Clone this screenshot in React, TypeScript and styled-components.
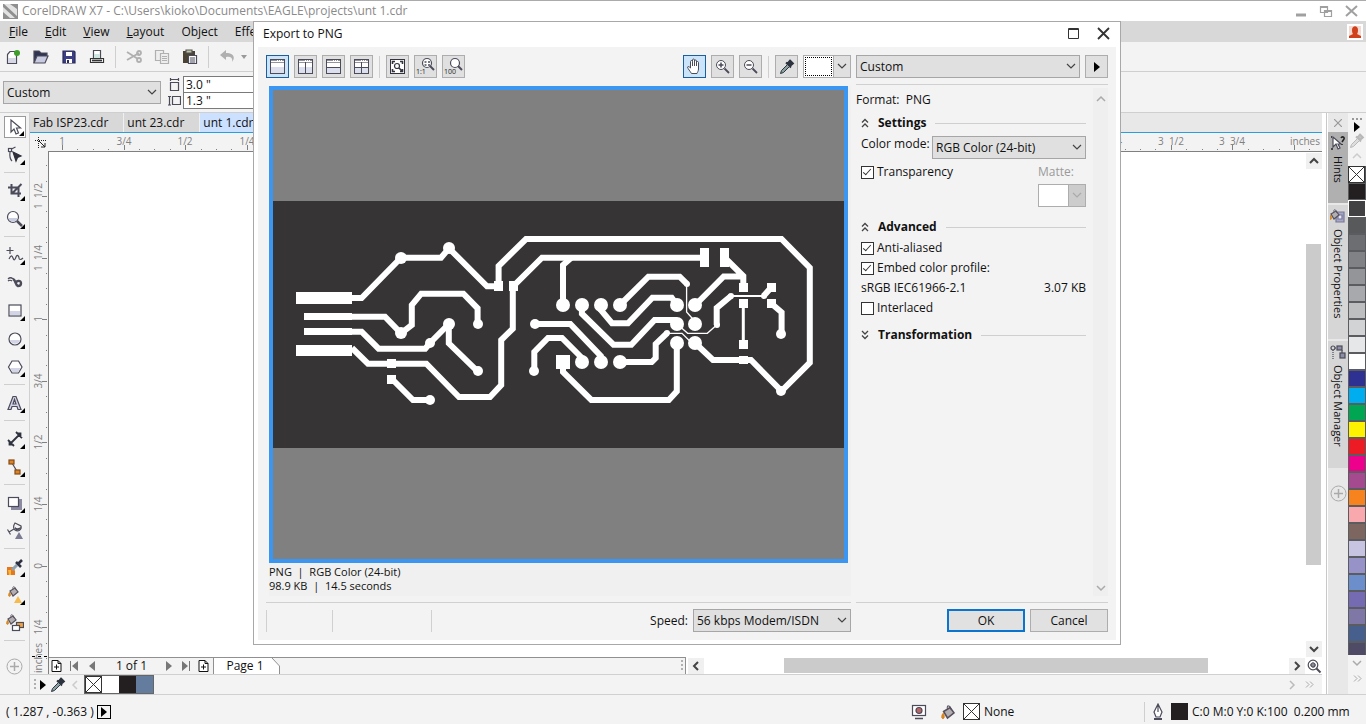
import React from "react";
import styled, { createGlobalStyle, css } from "styled-components";

const ink = "#4b4b5a";
const blue = "#3a96f0";

const GlobalStyle = createGlobalStyle`
  *, *::before, *::after { box-sizing: border-box; }
  body {
    margin: 0;
    background: #f3f3f3;
    color: #111;
    font-family: "Open Sans", "Noto Sans", sans-serif;
    font-size: 12px;
    line-height: 16px;
  }
  button, input, select { font: inherit; color: inherit; margin: 0; padding: 0; border-radius: 0; }
  button { background: none; border: 0; display: flex; align-items: center; justify-content: center; }
  svg { display: block; flex: none; }
`;

/* ---------- frame ---------- */

const Page = styled.div`
  position: relative;
  display: flex;
  flex-direction: column;
  height: 100vh;
  min-height: 600px;
  overflow: hidden;
  border-top: 1px solid #ababab;
`;

const TitleBar = styled.header`
  display: flex;
  align-items: center;
  gap: 4px;
  height: 20px;
  flex: none;
  padding: 0 8px 0 3px;
  background: #fff;
  color: #8a8a8a;
`;

const AppTitle = styled.h1`
  flex: 1;
  margin: 0;
  font-size: 12px;
  font-weight: 400;
  white-space: nowrap;
`;

const WindowButtons = styled.div`
  display: flex;
  gap: 12px;
`;

const MenuBar = styled.nav`
  display: flex;
  align-items: center;
  height: 21px;
  flex: none;
  padding: 0 3px 0 9px;
  gap: 17px;
  background: #d8d8d8;
`;

const Underlined = styled.span`
  text-decoration: underline;
`;

const Avatar = styled.button`
  width: 16px;
  height: 16px;
  margin-left: auto;
  background: #fff;
`;

const ToolBar = styled.div`
  display: flex;
  align-items: center;
  height: 30px;
  flex: none;
  padding-left: 5px;
  gap: 10px;
  border-bottom: 1px solid #cfcfcf;
`;

const ToolGroup = styled.div<{ $gap: number }>`
  display: flex;
  align-items: center;
  gap: ${(p) => p.$gap}px;
`;

const PropertyBar = styled.div`
  display: flex;
  align-items: center;
  height: 41px;
  flex: none;
  padding: 1px 3px 0;
  border-bottom: 1px solid #cfcfcf;
`;

const VRule = styled.span<{ $h: number; $m?: number }>`
  width: 1px;
  height: ${(p) => p.$h}px;
  margin: 0 ${(p) => p.$m ?? 0}px;
  flex: none;
  background: #cfcfcf;
`;

const SizeFields = styled.div`
  display: flex;
  flex-direction: column;
  margin-left: 7px;
`;

const SizeField = styled.label`
  display: flex;
  align-items: center;
  gap: 2px;
  height: 16px;
`;

const SizeInput = styled.input`
  width: 90px;
  height: 17px;
  padding-left: 2px;
  border: 1px solid #7a7a7a;
  background: #fff;
`;

/* ---------- select ---------- */

const SelectBox = styled.span<{ $w?: number }>`
  position: relative;
  display: flex;
  height: 23px;
  ${(p) => (p.$w ? css`width: ${p.$w}px; flex: none;` : css`flex: 1; min-width: 0;`)}
  svg {
    position: absolute;
    right: 4px;
    top: 8px;
    pointer-events: none;
  }
`;

const NativeSelect = styled.select`
  appearance: none;
  width: 100%;
  height: 100%;
  padding: 0 18px 0 3px;
  border: 1px solid #a6a6a6;
  background: #e0e0e0;
`;

const Chevron = ({ color = "#444" }: { color?: string }) => (
  <svg width="10" height="7" viewBox="0 0 10 7" fill="none" stroke={color} strokeWidth="1.2">
    <path d="M1 1l4 4 4-4" />
  </svg>
);

function Select({ id, label, options, width }: { id?: string; label?: string; options: string[]; width?: number }) {
  return (
    <SelectBox $w={width}>
      <NativeSelect id={id} aria-label={label}>
        {options.map((o) => (
          <option key={o}>{o}</option>
        ))}
      </NativeSelect>
      <Chevron />
    </SelectBox>
  );
}

/* ---------- workspace ---------- */

const Workspace = styled.main`
  display: flex;
  flex: 1;
  min-height: 0;
`;

const Toolbox = styled.div`
  display: flex;
  flex-direction: column;
  width: 30px;
  flex: none;
  border-right: 1px solid #d0d0d0;
`;

const Tool = styled.button<{ $active?: boolean }>`
  position: relative;
  width: 22px;
  height: 22px;
  margin: 3px 0 3px 4px;
  flex: none;
  ${(p) => p.$active && css`border: 1px solid #9a9a9a; background: #fff;`}
`;

const Flyout = styled.i`
  position: absolute;
  right: 1px;
  bottom: 1px;
  border-left: 5px solid transparent;
  border-bottom: 5px solid #000;
`;

const ToolRule = styled.span`
  height: 1px;
  margin: 3px 4px 4px;
  flex: none;
  background: #cfcfcf;
`;

const AddTool = styled.button`
  margin: auto auto 19px 6px;
`;

const Center = styled.section`
  display: flex;
  flex-direction: column;
  flex: 1;
  min-width: 0;
`;

const Tabs = styled.div`
  display: flex;
  height: 20px;
  flex: none;
  background: #e8e8e8;
  border-bottom: 1px solid #2a9ddf;
`;

const DocTab = styled.button<{ $active?: boolean }>`
  justify-content: flex-start;
  padding: 0 15px 0 3px;
  border-right: 1px solid #f0f0f0;
  white-space: nowrap;
  background: ${(p) => (p.$active ? "#cce0ff" : "#d8d8d8")};
`;

const RulerRow = styled.div`
  display: flex;
  height: 19px;
  flex: none;
`;

const RulerCorner = styled.div`
  display: flex;
  align-items: center;
  justify-content: center;
  width: 18px;
  flex: none;
  padding-left: 3px;
`;

const TopRuler = styled.div`
  flex: 1;
  min-width: 0;
  overflow: hidden;
  border-bottom: 1px solid #808080;
`;

const CanvasRow = styled.div`
  display: flex;
  flex: 1;
  min-height: 0;
`;

const SideRuler = styled.div`
  width: 19px;
  flex: none;
  overflow: hidden;
  border-right: 1px solid #808080;
`;

const CanvasColumn = styled.div`
  display: flex;
  flex-direction: column;
  flex: 1;
  min-width: 0;
`;

const Sheet = styled.div`
  display: flex;
  justify-content: flex-end;
  flex: 1;
  min-height: 0;
  background: #fff;
`;

const VScroll = styled.div`
  display: flex;
  flex-direction: column;
  align-items: center;
  width: 17px;
  padding-top: 1px;
`;

const ScrollButton = styled.button`
  width: 16px;
  height: 16px;
  flex: none;
  background: #f0f0f0;
`;

const VTrack = styled.div`
  display: flex;
  flex-direction: column;
  flex: 1;
  width: 15px;
  padding: 75px 0 76px;
`;

const Thumb = styled.div`
  flex: 1;
  background: #cbcbcb;
`;

const PageBar = styled.div`
  display: flex;
  height: 17px;
  flex: none;
`;

const PageNav = styled.div`
  display: flex;
  align-items: center;
  flex: 1;
  border-top: 1px solid #909090;
  border-right: 1px solid #909090;
  padding-left: 2px;
`;

const NavGroup = styled.div`
  display: flex;
  align-items: center;
  gap: 7px;
`;

const PageCount = styled.span`
  width: 55px;
  text-align: center;
`;

const PageTab = styled.button`
  position: relative;
  width: 67px;
  height: 16px;
  margin-left: 4px;
  padding-right: 4px;
  border-left: 1px solid #909090;
  svg { position: absolute; inset: 0; }
  span { position: relative; }
`;

const Grip = styled.span<{ $end?: boolean }>`
  width: 2px;
  height: 12px;
  margin: ${(p) => (p.$end ? "0 2px 0 auto" : "0")};
  background: repeating-linear-gradient(#b0b0b0 0 2px, transparent 2px 4px);
`;

const HScroll = styled.div`
  display: flex;
  flex: 1;
  align-items: center;
  background: #fff;
  padding-left: 2px;
`;

const HTrack = styled.div`
  display: flex;
  flex: 1;
  height: 15px;
  padding: 0 81px 0 80px;
`;

const DocPalette = styled.div`
  display: flex;
  align-items: center;
  height: 20px;
  flex: none;
  padding: 0 8px 0 4px;
  gap: 4px;
  border-top: 1px solid #d0d0d0;
`;

const SwatchStrip = styled.div`
  display: flex;
  border: 1px solid #666;
`;

const Swatch = styled.button<{ $c: string }>`
  width: 17px;
  height: 17px;
  flex: none;
  background: ${(p) => p.$c};
`;

const PaletteEnd = styled.span`
  display: flex;
  gap: 8px;
  margin-left: auto;
`;

const Docker = styled.aside`
  display: flex;
  flex-direction: column;
  width: 26px;
  flex: none;
  border-left: 4px solid #fff;
  background: #e8e8e8;
  box-shadow: inset 1px 0 #c8c8c8, inset 2px 0 #fff;
  padding-left: 2px;
`;

const DockerClose = styled.button`
  height: 19px;
  flex: none;
`;

const DockerTab = styled.button<{ $active?: boolean; $h: number }>`
  flex-direction: column;
  justify-content: flex-start;
  gap: 5px;
  height: ${(p) => p.$h}px;
  padding-top: 3px;
  flex: none;
  margin-bottom: 2px;
  font-size: 11px;
  background: ${(p) => (p.$active ? "#b0b0b0" : "#d6d6d6")};
  span { writing-mode: vertical-rl; line-height: 18px; white-space: nowrap; }
`;

const DockerAdd = styled.button`
  margin-top: 15px;
`;

const ColorBar = styled.aside`
  display: flex;
  flex-direction: column;
  align-items: center;
  width: 18px;
  flex: none;
`;

const ColorTop = styled.div`
  display: flex;
  flex-direction: column;
  align-items: center;
  justify-content: space-between;
  height: 53px;
  flex: none;
  padding: 5px 0;
`;

const ColorList = styled.div`
  display: flex;
  flex-direction: column;
  flex: 1;
  min-height: 0;
  width: 100%;
  overflow: hidden;
  background: #55565a;
`;

const PaletteSwatch = styled.button<{ $c: string; $ring?: boolean }>`
  height: 17px;
  width: 100%;
  flex: none;
  border: 1px solid ${(p) => (p.$ring ? "#fff" : "#5b5c60")};
  background: ${(p) => p.$c};
`;

const ColorEnd = styled.div`
  display: flex;
  flex-direction: column;
  align-items: center;
  gap: 6px;
  height: 39px;
  flex: none;
  padding-top: 3px;
`;

const StatusBar = styled.footer`
  display: flex;
  align-items: center;
  height: 30px;
  flex: none;
  padding: 4px 26px 0 6px;
  border-top: 1px solid #d0d0d0;
`;

const StatusGroup = styled.div<{ $w: number }>`
  display: flex;
  align-items: center;
  gap: 4px;
  width: ${(p) => p.$w}px;
  white-space: pre;
`;

const PlayBox = styled.button`
  width: 14px;
  height: 14px;
  margin: 0 auto 0 3px;
  border: 1px solid #000;
`;

/* ---------- dialog ---------- */

const Dialog = styled.section`
  position: absolute;
  top: 20px;
  left: 253px;
  right: 245px;
  bottom: 79px;
  display: flex;
  flex-direction: column;
  padding: 0 4px 4px;
  border: 1px solid #a8a8a8;
  background: #fff;
`;

const DialogTitle = styled.div`
  display: flex;
  align-items: center;
  height: 25px;
  flex: none;
  gap: 18px;
  padding: 0 6px 2px 5px;
  h2 { flex: 1; margin: 0; font-size: 12px; font-weight: 400; }
`;

const DialogBody = styled.div`
  display: flex;
  flex: 1;
  min-height: 0;
  gap: 5px;
  padding: 8px 8px 0;
  background: #f3f3f3;
`;

const PreviewColumn = styled.div`
  display: flex;
  flex-direction: column;
  flex: 1;
  min-width: 0;
`;

const OptionColumn = styled.div`
  display: flex;
  flex-direction: column;
  width: 252px;
  flex: none;
`;

const Row = styled.div`
  display: flex;
  align-items: center;
  flex: none;
  gap: 5px;
`;

const Push = styled.span`
  margin-left: auto;
`;

const IconButton = styled.button<{ $active?: boolean }>`
  width: 23px;
  height: 23px;
  flex: none;
  border: 1px solid ${(p) => (p.$active ? "#1b5fa0" : "#adadad")};
  background: ${(p) => (p.$active ? "#cce4f9" : "#e0e0e0")};
`;

const ColorPick = styled.button`
  width: 48px;
  height: 23px;
  flex: none;
  justify-content: space-between;
  align-items: stretch;
  border: 1px solid #adadad;
  background: #fff;
`;

const PickArea = styled.span<{ $focus?: boolean }>`
  flex: 1;
  margin: 1px;
  border: 1px ${(p) => (p.$focus ? "dotted #000" : "solid #fff")};
`;

const PickArrow = styled.span<{ $dim?: boolean }>`
  display: flex;
  align-items: center;
  justify-content: center;
  width: 17px;
  border-left: 1px solid #adadad;
  background: ${(p) => (p.$dim ? "#cccccc" : "#e0e0e0")};
`;

const PreviewArea = styled.div`
  display: flex;
  flex-direction: column;
  flex: 1;
  min-height: 0;
  margin: 8px 0 6px 3px;
  background: #eff0ef;
`;

const Preview = styled.div`
  display: flex;
  align-items: center;
  flex: 1;
  min-height: 0;
  margin-right: 3px;
  border: 4px solid ${blue};
  background: #808080;
  svg { width: 100%; height: auto; background: #373435; }
`;

const PreviewInfo = styled.p`
  margin: 0;
  padding: 2px 0 3px;
  font-size: 11px;
  line-height: 14px;
  white-space: pre;
`;

const Footer = styled.div`
  display: flex;
  align-items: center;
  flex: none;
  gap: 5px;
  height: 38px;
  padding-bottom: 2px;
  border-top: 1px solid #d0d0d0;
`;

const StatusCell = styled.span<{ $w: number }>`
  width: ${(p) => p.$w}px;
  height: 22px;
  border-left: 1px solid #d0d0d0;
`;

const Options = styled.div`
  display: flex;
  flex: 1;
  min-height: 0;
  margin: 6px 0;
  border-top: 1px solid #d0d0d0;
`;

const OptionList = styled.div`
  display: flex;
  flex-direction: column;
  flex: 1;
  padding: 5px 7px 0 0;
`;

const OptionScroll = styled.div`
  display: flex;
  flex-direction: column;
  justify-content: space-between;
  align-items: center;
  width: 15px;
  margin-top: 3px;
  padding: 6px 0 3px;
  background: #efefef;
`;

const SectionHead = styled.h3`
  display: flex;
  align-items: center;
  gap: 9px;
  height: 20px;
  margin: 3px 0 0;
  padding-left: 5px;
  font-size: 12px;
  font-weight: 700;
  &::after { content: ""; flex: 1; height: 1px; background: #cfcfcf; }
`;

const Group = styled.div`
  display: flex;
  flex-direction: column;
  padding: 1px 0 4px 5px;
`;

const ModeRow = styled.div`
  display: flex;
  justify-content: space-between;
  height: 24px;
  margin: 2px 0 1px;
  white-space: nowrap;
`;

const SplitRow = styled.div`
  display: flex;
  justify-content: space-between;
  height: 20px;
  align-items: center;
`;

const CheckLabel = styled.label`
  display: flex;
  align-items: center;
  gap: 3px;
  height: 20px;
`;

const Check = styled.input`
  appearance: none;
  position: relative;
  width: 13px;
  height: 13px;
  border: 1px solid #333;
  background: #fff;
  &:checked::after {
    content: "";
    position: absolute;
    left: 3px;
    top: 0;
    width: 4px;
    height: 8px;
    border: solid #333;
    border-width: 0 1px 1px 0;
    transform: rotate(42deg);
  }
`;

const Matte = styled.div`
  display: flex;
  flex-direction: column;
  width: 48px;
  gap: 4px;
  padding-top: 2px;
  color: #9a9a9a;
`;

const TransparencyRow = styled.div`
  display: flex;
  justify-content: space-between;
  align-items: flex-start;
  height: 49px;
  padding-top: 1px;
`;

const DialogButton = styled.button<{ $primary?: boolean }>`
  width: 78px;
  height: 23px;
  border: ${(p) => (p.$primary ? "2px solid #0b74cf" : "1px solid #adadad")};
  background: #e1e1e1;
`;

/* ---------- icons ---------- */

const Svg = ({ w = 18, h = 18, children }: { w?: number; h?: number; children: React.ReactNode }) => (
  <svg width={w} height={h} viewBox={`0 0 ${w} ${h}`} fill="none" stroke={ink} strokeWidth="1.2">
    {children}
  </svg>
);

const Dropper = ({ faded }: { faded?: boolean }) => (
  <Svg w={16} h={16}>
    <g stroke={faded ? "#b8b8b8" : "#2d3440"} fill={faded ? "#c4c4c4" : "#2d3440"}>
      <path d="M11 1.500l3 3-3 2.500-2.500-2.500zM7 3.500l5 5" strokeWidth="1.800" />
      <path d="M8.500 5.500l-6 6-1 3 3-1 6-6z" fill={faded ? "#ddd" : "#8aa0a0"} strokeWidth="1" />
    </g>
  </Svg>
);

const NoColor = () => (
  <svg width="17" height="17" viewBox="0 0 17 17" fill="#fff" stroke="#333" strokeWidth="1">
    <rect x=".5" y=".5" width="16" height="16" />
    <path d="M1 1l15 15M16 1L1 16" />
  </svg>
);

const CirclePlus = () => (
  <svg width="17" height="17" viewBox="0 0 17 17" fill="none" stroke="#aaa">
    <circle cx="8.500" cy="8.500" r="7.500" />
    <path d="M8.500 4v9M4 8.500h9" strokeWidth="1.500" />
  </svg>
);

const Arrow = () => (
  <svg width="6" height="10" viewBox="0 0 6 10" fill="#000">
    <path d="M0 0l6 5-6 5z" />
  </svg>
);

const Angle = ({ dir, color = "#444", width = 2 }: { dir: "up" | "down" | "left" | "right"; color?: string; width?: number }) => {
  const paths = { up: "M1 7l4-4 4 4", down: "M1 3l4 4 4-4", left: "M7 1L3 5l4 4", right: "M3 1l4 4-4 4" };
  return (
    <svg width="10" height="10" viewBox="0 0 10 10" fill="none" stroke={color} strokeWidth={width}>
      <path d={paths[dir]} />
    </svg>
  );
};

const DoubleAngle = () => (
  <svg width="9" height="9" viewBox="0 0 9 9" fill="none" stroke="#aaa">
    <path d="M1 1.500l3 3-3 3M5 1.500l3 3-3 3" />
  </svg>
);

const Fold = ({ open }: { open?: boolean }) => (
  <svg width="8" height="10" viewBox="0 0 8 10" fill="none" stroke="#444" strokeWidth="1.300">
    <path d={open ? "M1 4.500l3-3 3 3M1 9l3-3 3 3" : "M1 1l3 3 3-3M1 5.500l3 3 3-3"} />
  </svg>
);

const PageAdd = () => (
  <svg width="11" height="12" viewBox="0 0 11 12" fill="#fff" stroke="#111">
    <path d="M1 .5h6l3 3v8H1zM7 .5v3h3M5.500 4.500v5M3 7h5" />
  </svg>
);

const Bucket = ({ x = 0, y = 0 }: { x?: number; y?: number }) => (
  <g transform={`translate(${x} ${y})`}>
    <path d="M2 5l5-3 3 4-5 4z" fill="#b3aeb2" stroke="#55505c" />
    <path d="M1.500 6.500c-1 1-1.500 4 0 4s1-3 .5-4z" fill="#e08b1c" stroke="#c77a18" strokeWidth=".6" />
    <path d="M5 3C4 0 7-.5 8 4" stroke="#55505c" strokeWidth=".8" />
  </g>
);

const tools: { name: string; icon: React.ReactNode; flyout?: boolean; rule?: boolean }[] = [
  { name: "Pick", flyout: true, icon: <path d="M5 2v12l3-3 2 5 2.500-1-2-5h4z" fill="#fff" /> },
  {
    name: "Shape", flyout: true, rule: true,
    icon: <><rect x="2.500" y="2.500" width="3" height="3" fill="#fff" /><path d="M5.500 3l4-2M4 6c-.5 4 0 7 2 9" /><path d="M7 6l8 4-3.500 1.500L10 15z" fill="#2d2f3a" stroke="#2d2f3a" /></>,
  },
  { name: "Crop", flyout: true, icon: <path d="M2 5.500h10.500V15M5.500 2v9.500H15M15.500 2L6 11.500" strokeWidth="2" /> },
  {
    name: "Zoom", flyout: true, rule: true,
    icon: <><circle cx="7" cy="7" r="5.500" fill="#fff" /><path d="M2.500 8h9c-1 5-8 5-9 0z" fill="#c9cce0" stroke="none" /><path d="M11 11l5 5" strokeWidth="2.500" /></>,
  },
  { name: "Freehand", flyout: true, icon: <path d="M4 1v7M.5 4.500h7M3 13c2-4 3-4 4-1s2 2 3-1 3-1 3 1 2 2 4 0" /> },
  {
    name: "Artistic media",
    icon: <><path d="M7 5c3 1 2 6 5 7 4 0 4-6 0-5-1 0-2 1-1 2" strokeWidth="2.400" /><path d="M2 5c2-2 4-1 5 0M2 7c1-1 3-1 4 0" /></>,
  },
  { name: "Rectangle", flyout: true, icon: <><rect x="3" y="3" width="12" height="11" fill="#fff" /><path d="M4 9h10v4H4z" fill="#d3d5e6" stroke="none" /></> },
  { name: "Ellipse", flyout: true, icon: <><circle cx="9" cy="9" r="6" fill="#fff" /><path d="M4 10h10c-1 5-9 5-10 0z" fill="#d3d5e6" stroke="none" /></> },
  { name: "Polygon", flyout: true, rule: true, icon: <><path d="M2.500 9L6 3h6.500L16 9l-3.500 6H6z" fill="#fff" /><path d="M4 10h10.500l-2.500 4H6.500z" fill="#d3d5e6" stroke="none" /></> },
  {
    name: "Text", flyout: true, rule: true,
    icon: <path d="M2 15.500L7 2.500h3l5 13h-3l-1-3H6l-1 3zM7 10h3L8.500 5.500z" fill="#d3d5e6" />,
  },
  { name: "Dimension", flyout: true, icon: <path d="M5 13l8-8M2 10l6 6M10 2l6 6M3.500 11v3.500H7M11 3.500h3.500V7" strokeWidth="1.800" stroke="#2f333f" /> },
  {
    name: "Connector", flyout: true, rule: true,
    icon: <><path d="M6 5l6 10" /><rect x="3" y="2" width="5" height="4" fill="#d8842a" stroke="#8a4b12" /><rect x="9" y="12" width="5" height="4" fill="#d8842a" stroke="#8a4b12" /></>,
  },
  { name: "Drop shadow", flyout: true, icon: <><path d="M5 5h11v11H5z" fill="#8a8aa0" stroke="none" /><rect x="2.500" y="3.500" width="10" height="9" fill="#fff" /></> },
  {
    name: "Transparency", rule: true,
    icon: <><path d="M9 1l6 3c1 4-3 6-6 4-2-2-2-4 0-7zM8 7l-5 3M1.500 7.500l3 5" fill="none" /><path d="M9 5c2 2 4 1 6 0-1 4-5 4-6 2z" fill={ink} stroke="none" /><path d="M9 17l4-7 4 7z" fill="#7b7b92" stroke="none" /></>,
  },
  {
    name: "Color eyedropper", flyout: true,
    icon: <><path d="M1 9h8v8H1z" fill="#e8771c" stroke="none" /><path d="M2 12h3v5h-2zM6 10h3v3" fill="#f7b738" stroke="none" /><path d="M6 12l5-5" stroke="#8ba0b0" strokeWidth="3" /><path d="M10 4l5 5M12 6l4-4" stroke="#2d3040" strokeWidth="2.600" /></>,
  },
  { name: "Interactive fill", flyout: true, icon: <><Bucket x={2} /><path d="M8 17l4-7 4 7z" fill="#f6bb4c" stroke="none" /></> },
  { name: "Smart fill", rule: true, icon: <><Bucket /><rect x="10.500" y="8.500" width="7" height="5" fill="#f3a33c" /><rect x="6.500" y="11.500" width="7" height="5" fill="#fff" /></> },
];

const swatches = [
  "#231f20", "#414042", "#58595b", "#6d6e71", "#808285", "#939598", "#a7a9ac", "#bcbec0", "#d1d3d4", "#e6e7e8",
  "#ffffff", "#2e3192", "#00aeef", "#00a651", "#fff200", "#ed1c24", "#ec008c", "#a54a8f", "#f7831e", "#f9a8ae",
  "#7d6560", "#c7c4e2", "#9793c8", "#6c8fcb", "#746bb2", "#7f77a5", "#465f8c", "#4f4a66",
];

/* ---------- rulers ---------- */

const QUARTER = 61.6;

function quarterLabel(n: number) {
  const q = Math.abs(n);
  const whole = Math.floor(q / 4);
  const part = ["", "1/4", "1/2", "3/4"][q % 4];
  if (!part) return String(whole);
  return whole ? `${whole}\u00a0\u00a0${part}` : part;
}

function HorizontalRuler() {
  const marks = Array.from({ length: 84 }, (_, i) => i - 1);
  return (
    <svg width="1400" height="18" stroke="#808080" fontSize="10" textAnchor="middle">
      {marks.map((i) => {
        const x = Math.round(14 + (i * QUARTER) / 4);
        const major = i % 4 === 0;
        return <path key={i} d={`M${x}.5 ${major ? 12 : 16}v${major ? 5 : 1}`} />;
      })}
      <g stroke="none" fill="#808080">
        {Array.from({ length: 20 }, (_, k) => (
          <text key={k} x={Math.round(14 + k * QUARTER)} y="12">{quarterLabel(k - 4)}</text>
        ))}
        <text x="1257" y="12">inches</text>
      </g>
    </svg>
  );
}

function VerticalRuler() {
  const marks = Array.from({ length: 34 }, (_, i) => i - 2);
  return (
    <svg width="18" height="521" stroke="#808080" fontSize="10" textAnchor="middle">
      {marks.map((i) => {
        const y = Math.round(44 + (i * QUARTER) / 4);
        const major = i % 4 === 0;
        return <path key={i} d={`M${major ? 12 : 16} ${y}.5h${major ? 5 : 1}`} />;
      })}
      <g stroke="none" fill="#808080">
        {Array.from({ length: 8 }, (_, k) => {
          const y = Math.round(44 + k * QUARTER);
          return <text key={k} transform={`translate(12 ${y}) rotate(-90)`}>{quarterLabel(6 - k)}</text>;
        })}
        <text transform="translate(12 506) rotate(-90)">inches</text>
      </g>
      <path d="M2 504.500h3M8 504.500h3M14 504.500h3" stroke="#000" />
    </svg>
  );
}

/* ---------- circuit board ---------- */

const traces = [
  "M79 97h9.600L128 56.700h40l8-9.400 38 38h11",
  "M225.600 85V65L253 38h255.500l28.300 28.700v95L508.500 190 478 159h-38l-18-17",
  "M428 56.700H269l-29.200 29v42L228.200 139v45L217 196h-31l-32.700-33.300H95L79 147",
  "M298 57l-8 7v40",
  "M453 58l17.300 17v11M470 75.500h-19.300L422.300 104",
  "M498.600 86l-8 9M458.300 94.700L443.700 107v17",
  "M498.600 102.700l10 8.600V133",
  "M347 104l28.400-28.300h31.300l7 7",
  "M327.800 104v5L339 122.300h16l24.400-25.600h19.300L404 104",
  "M308.900 104v8.700l31.600 31h17.800L381.600 119H404",
  "M261.600 123h35.700l30.500 32v6",
  "M261.300 170v-19L275 137h14l20 20",
  "M290 168v3l28.300 28h77.500l8-8.700V142",
  "M347 161h31.700l4-4v-14L394 132.300",
  "M79 115.700h33l16 16.600 10.800-8.300v-20l9.400-11.300h42.200l14.200 14.600V123",
  "M79 130.700h9.600l17 17h46.600L157 142l18.800-19",
  "M175.800 123v19.300l28.800 28",
  "M119 178l21 21h17",
];
const thinTraces = ["M413.600 83v28l8 9", "M443.700 124l-9.400 8.300h-19.600L404 123", "M394 132.300h15l10 10"];
const bigDots = [[290, 104], [309, 104], [328, 104], [347, 104], [404, 104], [422, 104], [404, 123], [422, 123], [404, 142], [422, 142], [309, 161], [328, 161], [347, 161]];
const midDots = [[128, 57], [176, 47], [128, 132], [176, 123]];
const smallDots = [[508, 190], [508, 133], [262, 123], [261, 170], [205, 123], [205, 170], [157, 142], [157, 199]];
const pads = [
  [23, 91, 56, 12], [31, 112, 48, 7], [31, 127, 48, 7], [23, 144, 56, 11],
  [221, 80, 9, 10], [236, 80, 9, 10], [427, 47, 9, 19], [447, 47, 9, 19],
  [466, 82, 9, 9], [466, 98, 9, 9], [466, 139, 9, 9], [466, 155, 9, 8],
  [494, 82, 9, 9], [494, 98, 9, 9], [114, 158, 9, 9], [114, 174, 9, 9], [283, 154, 14, 14],
];

function Circuit() {
  const dots = (list: number[][], r: number) => list.map(([x, y]) => <circle key={`${x}-${y}`} cx={x} cy={y} r={r} />);
  return (
    <svg viewBox="0 0 571 247" role="img" aria-label="Circuit board preview">
      <g fill="none" stroke="#fff" strokeWidth="6">
        {traces.map((d) => <path key={d} d={d} />)}
        {thinTraces.map((d) => <path key={d} d={d} strokeWidth="1.300" />)}
        <path d="M490 95h-33" strokeWidth="2" />
        <path d="M470.300 106v34" strokeWidth="3" />
      </g>
      <g fill="#fff">
        {dots(bigDots, 7)}
        {dots(midDots, 6)}
        {dots(smallDots, 5)}
        {dots([[491, 95], [458, 95], [444, 124], [414, 83], [394, 132]], 3)}
        {pads.map(([x, y, w, h]) => <rect key={`${x}-${y}`} x={x} y={y} width={w} height={h} />)}
      </g>
    </svg>
  );
}

/* ---------- export dialog ---------- */

const frameIcons = [
  { name: "Full preview", d: "" },
  { name: "Two vertical previews", d: "M8.500 4v12" },
  { name: "Two horizontal previews", d: "M1 9.500h15" },
  { name: "Four previews", d: "M8.500 4v12M1 9.500h15" },
];

const FrameIcon = ({ d }: { d: string }) => (
  <svg width="17" height="17" viewBox="0 0 17 17" fill="none" stroke={ink}>
    <rect x="1.500" y="1.500" width="14" height="14" fill="#fff" />
    <path d="M2 9h13v6H2z" fill="#dcdfee" stroke="none" />
    <path d="M2 2.500h13" strokeDasharray="6 1 1 1 1 1" strokeWidth=".6" />
    <path d="M1.500 4.500h14" strokeWidth=".6" />
    <path d={d} />
  </svg>
);

const Lens = ({ mark }: { mark: string }) => (
  <Svg w={17} h={17}>
    <circle cx="7" cy="7" r="4.500" fill="#fff" strokeWidth="1" />
    <path d="M10.500 10.500l4.500 4.500" strokeWidth="1.800" />
    <path d={mark} strokeWidth="1.500" />
  </Svg>
);

const ScaleLens = ({ text, dots }: { text: string; dots?: boolean }) => (
  <svg width="21" height="21" viewBox="0 0 21 21" fill="none" stroke={ink}>
    <circle cx="12" cy="7" r="4.500" fill="#fff" strokeWidth="1.200" />
    <path d="M15 10l4 4" strokeWidth="2" />
    {dots && <path d="M9.500 6h2M13 6h2M9.500 9h2M13 9h2" strokeWidth="1.500" />}
    <text x="1" y="18" fontSize="7" fill="#222" stroke="none">{text}</text>
  </svg>
);

function ExportDialog() {
  return (
    <Dialog role="dialog" aria-label="Export to PNG">
      <DialogTitle>
        <h2>Export to PNG</h2>
        <button aria-label="Maximize">
          <svg width="11" height="11" viewBox="0 0 11 11" fill="none" stroke="#333">
            <path d="M.5.5h10v10H.5zM0 1.500h11" />
          </svg>
        </button>
        <button aria-label="Close">
          <svg width="13" height="13" viewBox="0 0 13 13" stroke="#333" strokeWidth="1.800">
            <path d="M1 1l11 11M12 1L1 12" />
          </svg>
        </button>
      </DialogTitle>
      <DialogBody>
        <PreviewColumn>
          <Row>
            {frameIcons.map((f, i) => (
              <IconButton key={f.name} aria-label={f.name} $active={i === 0}><FrameIcon d={f.d} /></IconButton>
            ))}
            <VRule $h={22} $m={1} />
            <IconButton aria-label="Zoom to fit">
              <svg width="15" height="15" viewBox="0 0 15 15" fill="none" stroke="#33333f">
                <rect x=".5" y=".5" width="14" height="14" fill="#fff" />
                <circle cx="7" cy="7" r="2.500" strokeWidth="1.200" />
                <path d="M9 9l3 3M2.500 5V2.500H5M10 2.500h2.500V5M2.500 10v2.500H5M10 12.500h2.500V10" strokeWidth="1.600" />
              </svg>
            </IconButton>
            <IconButton aria-label="Actual size"><ScaleLens text="1:1" dots /></IconButton>
            <IconButton aria-label="Zoom to 100%"><ScaleLens text="100" /></IconButton>
            <Push />
            <IconButton aria-label="Pan" $active>
              <svg width="17" height="17" viewBox="0 0 17 17" fill="#fff" stroke={ink} strokeLinejoin="round">
                <path d="M5.500 15.500C4 13 2 11 1.500 9c.5-1 1.500-.5 3 1V3.500c0-1.300 2-1.300 2 0V2c0-1.300 2-1.300 2 0v1c0-1.300 2-1.300 2 0v1.500c0-1.300 2-1.300 2 0V11c0 2-1 3-1.500 4.500zM6.500 3.500V8M8.500 3v5M10.500 4v4" />
              </svg>
            </IconButton>
            <IconButton aria-label="Zoom in"><Lens mark="M4.500 7h5M7 4.500v5" /></IconButton>
            <IconButton aria-label="Zoom out"><Lens mark="M4.500 7h5" /></IconButton>
            <VRule $h={22} $m={1} />
            <IconButton aria-label="Eyedropper"><Dropper /></IconButton>
            <ColorPick aria-label="Eyedropper color">
              <PickArea $focus />
              <PickArrow><Chevron /></PickArrow>
            </ColorPick>
          </Row>
          <PreviewArea>
            <Preview><Circuit /></Preview>
            <PreviewInfo>{"PNG  |  RGB Color (24-bit)\n98.9 KB  |  14.5 seconds"}</PreviewInfo>
          </PreviewArea>
          <Footer>
            <StatusCell $w={61} />
            <StatusCell $w={94} />
            <StatusCell $w={60} />
            <Push />
            <label htmlFor="speed">Speed:</label>
            <Select id="speed" width={158} options={["56 kbps Modem/ISDN"]} />
          </Footer>
        </PreviewColumn>
        <OptionColumn>
          <Row>
            <Select label="Preset list" options={["Custom"]} />
            <IconButton aria-label="Preset options"><Arrow /></IconButton>
          </Row>
          <Options>
            <OptionList>
              <SplitRow><span>Format:&nbsp; PNG</span></SplitRow>
              <SectionHead><Fold open />Settings</SectionHead>
              <Group>
                <ModeRow>
                  <label htmlFor="mode">Color mode:</label>
                  <Select id="mode" width={154} options={["RGB Color (24-bit)"]} />
                </ModeRow>
                <TransparencyRow>
                  <CheckLabel><Check type="checkbox" defaultChecked />Transparency</CheckLabel>
                  <Matte>
                    <span>Matte:</span>
                    <ColorPick aria-label="Matte" disabled>
                      <PickArea />
                      <PickArrow $dim><Chevron color="#aaa" /></PickArrow>
                    </ColorPick>
                  </Matte>
                </TransparencyRow>
              </Group>
              <SectionHead><Fold open />Advanced</SectionHead>
              <Group>
                <CheckLabel><Check type="checkbox" defaultChecked />Anti-aliased</CheckLabel>
                <CheckLabel><Check type="checkbox" defaultChecked />Embed color profile:</CheckLabel>
                <SplitRow><span>sRGB IEC61966-2.1</span><span>3.07 KB</span></SplitRow>
                <CheckLabel><Check type="checkbox" />Interlaced</CheckLabel>
              </Group>
              <SectionHead><Fold />Transformation</SectionHead>
            </OptionList>
            <OptionScroll>
              <Angle dir="up" color="#aaa" width={1.5} />
              <Angle dir="down" color="#aaa" width={1.5} />
            </OptionScroll>
          </Options>
          <Footer>
            <Push />
            <DialogButton $primary>OK</DialogButton>
            <DialogButton>Cancel</DialogButton>
          </Footer>
        </OptionColumn>
      </DialogBody>
    </Dialog>
  );
}

/* ---------- application ---------- */

const menus = ["File", "Edit", "View", "Layout"];

export default function App() {
  return (
    <Page>
      <GlobalStyle />
      <TitleBar>
        <svg width="15" height="15" viewBox="0 0 15 15">
          <path d="M0 0h15v15H0z" fill="#8f8f8f" />
          <path d="M1 0l13 12V5L7 0zM0 3l12 11H7L0 8z" fill="#e2e2e2" />
        </svg>
        <AppTitle>CorelDRAW X7 - C:\Users\kioko\Documents\EAGLE\projects\unt 1.cdr</AppTitle>
        <WindowButtons>
          <button aria-label="Minimize"><svg width="12" height="12"><path d="M1 10h10" stroke="#a0a0a0" strokeWidth="3" /></svg></button>
          <button aria-label="Restore">
            <svg width="14" height="13" fill="#fff" stroke="#a0a0a0" strokeWidth="1.200"><path d="M1.500 1.500h7v6h-7zM5.500 5.500h7v6h-7zM5 6.500h8M1 2.500h8" /></svg>
          </button>
          <button aria-label="Close"><svg width="13" height="12" stroke="#a0a0a0" strokeWidth="2"><path d="M1 1l11 10M12 1L1 11" /></svg></button>
        </WindowButtons>
      </TitleBar>
      <MenuBar>
        {menus.map((m) => (
          <button key={m}><Underlined>{m[0]}</Underlined>{m.slice(1)}</button>
        ))}
        <button>Object</button>
        <button aria-label="Effects">Effe</button>
        <Avatar aria-label="Account">
          <svg width="14" height="14"><path d="M1 1h12v12H1z" fill="#f3d9cf" /><path d="M4 5c0-5 6-5 6 0 0 3-1 4-1 4l4 2v2H1v-2l4-2S4 8 4 5z" fill="#d0401c" /></svg>
        </Avatar>
      </MenuBar>
      <ToolBar>
        <ToolGroup $gap={12}>
          <button aria-label="New"><Svg w={16} h={16}><path d="M2.500 5.500L5 2.500h6.500v12h-9z" fill="#fff" /><path d="M3 9h8v5H3z" fill="#d6d8e6" stroke="none" /><circle cx="12" cy="4" r="3" fill="#3f9e2c" stroke="none" /></Svg></button>
          <button aria-label="Open"><Svg w={16} h={16}><path d="M1 14V2h5l2 2h6v3" fill="#2f3550" /><path d="M1 14l3-7h11l-3 7z" fill="#c9cbe0" /></Svg></button>
          <button aria-label="Save"><Svg w={16} h={16}><path d="M2 2h11l1 1v11H2z" fill="#3c3f86" stroke="#2a2c55" /><path d="M5 3h6v4H5zM5 10h6v4H5z" fill="#fff" stroke="none" /><path d="M6 11h2v3H6z" fill="#2a2c55" stroke="none" /></Svg></button>
          <button aria-label="Print"><Svg w={16} h={16}><path d="M4.500 9V1.500h7V9" fill="#fff" /><path d="M5 5h6v4H5z" fill="#cfe3df" stroke="none" /><path d="M1.500 9.500h13v4h-13z" fill="#fff" stroke="#333" /><path d="M3 11.500h10" stroke="#333" strokeWidth="1.800" /></Svg></button>
        </ToolGroup>
        <VRule $h={22} />
        <ToolGroup $gap={12}>
          <button aria-label="Cut"><Svg w={16} h={16}><g stroke="#b0b0b0" strokeWidth="1.800"><path d="M1 3l11 7M1 11l12-7" /><circle cx="13" cy="4" r="2" /><circle cx="13" cy="11" r="2" /></g></Svg></button>
          <button aria-label="Copy"><Svg w={16} h={16}><g stroke="#b0b0b0" fill="#eee"><path d="M1.500 1.500h8v10h-8z" /><path d="M6.500 4.500h8v10h-8zM8 7.500h5M8 9.500h5M8 11.500h5" /></g></Svg></button>
          <button aria-label="Paste"><Svg w={16} h={16}><path d="M1 2h12v12H1z" fill="#4a4234" stroke="none" /><path d="M4 1h6v3H4z" fill="#bfc3a6" stroke="#555" /><path d="M6.500 6.500h8v8h-8zM8 9h5M8 11h5M8 13h5" fill="#fff" /></Svg></button>
        </ToolGroup>
        <VRule $h={22} />
        <ToolGroup $gap={6}>
          <button aria-label="Undo"><Svg w={16} h={16}><path d="M7 1L1 6l6 5V8c5-1 7 1 6 5 4-5 1-9-6-9z" fill="#b0b0b0" stroke="none" /></Svg></button>
          <button aria-label="Undo list"><svg width="6" height="4"><path d="M0 0h6L3 4z" fill="#999" /></svg></button>
        </ToolGroup>
      </ToolBar>
      <PropertyBar>
        <Select label="Page size" width={158} options={["Custom"]} />
        <SizeFields>
          <SizeField>
            <Svg w={13} h={14}><path d="M2.500 4.500h8v8h-8zM2 1.500h9M2.500 0v3M10.500 0v3" fill="none" /></Svg>
            <SizeInput aria-label="Page width" defaultValue={'3.0 "'} />
          </SizeField>
          <SizeField>
            <Svg w={13} h={14}><path d="M4.500 2.500h8v8h-8zM1.500 2v9M0 2.500h3M0 11h3" fill="none" /></Svg>
            <SizeInput aria-label="Page height" defaultValue={'1.3 "'} />
          </SizeField>
        </SizeFields>
      </PropertyBar>
      <Workspace>
        <Toolbox>
          {tools.map((t, i) => (
            <React.Fragment key={t.name}>
              <Tool aria-label={t.name} $active={i === 0}>
                <Svg>{t.icon}</Svg>
                {t.flyout && <Flyout />}
              </Tool>
              {t.rule && <ToolRule />}
            </React.Fragment>
          ))}
          <AddTool aria-label="Customize"><CirclePlus /></AddTool>
        </Toolbox>
        <Center>
          <Tabs>
            <DocTab>Fab ISP23.cdr</DocTab>
            <DocTab>unt 23.cdr</DocTab>
            <DocTab $active>unt 1.cdr</DocTab>
          </Tabs>
          <RulerRow>
            <RulerCorner>
              <svg width="11" height="11" fill="none" stroke="#222"><path d="M3.500 0v11M0 3.500h11" strokeDasharray="1 1" /><path d="M4 4l6 6M10 6v4H6" /></svg>
            </RulerCorner>
            <TopRuler><HorizontalRuler /></TopRuler>
          </RulerRow>
          <CanvasRow>
            <SideRuler><VerticalRuler /></SideRuler>
            <CanvasColumn>
              <Sheet>
                <VScroll>
                  <ScrollButton aria-label="Scroll up"><Angle dir="up" /></ScrollButton>
                  <VTrack><Thumb /></VTrack>
                  <ScrollButton aria-label="Scroll down"><Angle dir="down" /></ScrollButton>
                </VScroll>
              </Sheet>
              <PageBar>
                <PageNav>
                  <NavGroup>
                    <button aria-label="Add page before"><PageAdd /></button>
                    <button aria-label="First page"><svg width="10" height="10" fill="#777"><path d="M1 0h1v10H1zM9 0v10L3 5z" /></svg></button>
                    <button aria-label="Previous page"><svg width="11" height="10" fill="#777"><path d="M9 0v10L3 5z" /></svg></button>
                    <PageCount>1 of 1</PageCount>
                    <button aria-label="Next page"><svg width="6" height="10" fill="#777"><path d="M0 0v10l6-5z" /></svg></button>
                    <button aria-label="Last page"><svg width="12" height="10" fill="#777"><path d="M10 0h1v10h-1zM3 0v10l6-5z" /></svg></button>
                    <button aria-label="Add page after"><PageAdd /></button>
                  </NavGroup>
                  <PageTab>
                    <svg width="67" height="16"><path d="M0 0h58l8 8v8H0z" fill="#fff" /><path d="M58 0l7.500 8v8" fill="none" stroke="#909090" /></svg>
                    <span>Page 1</span>
                  </PageTab>
                  <Grip $end />
                </PageNav>
                <HScroll>
                  <ScrollButton aria-label="Scroll left"><Angle dir="left" /></ScrollButton>
                  <HTrack><Thumb /></HTrack>
                  <ScrollButton aria-label="Scroll right"><Angle dir="right" /></ScrollButton>
                  <button aria-label="Navigator"><Svg w={17} h={16}><circle cx="8" cy="7" r="4.800" /><circle cx="8" cy="7" r="2" /><path d="M11.500 10.500l4 4" strokeWidth="2" /><path d="M8 4v6M5 7h6" strokeWidth=".8" /></Svg></button>
                </HScroll>
              </PageBar>
            </CanvasColumn>
          </CanvasRow>
          <DocPalette>
            <Grip />
            <Arrow />
            <Dropper />
            <Angle dir="left" color="#ccc" width={1.5} />
            <SwatchStrip>
              <NoColor />
              <Swatch $c="#fff" aria-label="White" />
              <Swatch $c="#231f20" aria-label="Black" />
              <Swatch $c="#647d9e" aria-label="Slate blue" />
            </SwatchStrip>
            <PaletteEnd><Angle dir="right" color="#bbb" width={1.5} /><DoubleAngle /></PaletteEnd>
          </DocPalette>
        </Center>
        <Docker>
          <DockerClose aria-label="Close docker"><svg width="8" height="8" stroke="#999" strokeWidth="1.200"><path d="M0 0l8 8M8 0L0 8" /></svg></DockerClose>
          <DockerTab $active $h={71}>
            <Svg w={16} h={16}><path d="M3 2v10l3-3 2 5 2-1-2-4h3z" fill="#fff" /><path d="M11 3c1-2 4-1 3 1l-2 3M12 9v1M1 2h1M1 14h2" stroke="#222" strokeWidth="1.500" /></Svg>
            <span>Hints</span>
          </DockerTab>
          <DockerTab $h={134}>
            <Svg w={16} h={16}><path d="M6 4h8v10H6z" fill="#a7a7c4" stroke="#77779a" /><path d="M8 7h4v4H8z" fill="#e6e6f5" stroke="#77779a" /><Bucket x={-1} y={1} /></Svg>
            <span>Object Properties</span>
          </DockerTab>
          <DockerTab $h={127}>
            <Svg w={16} h={16}><circle cx="3" cy="4" r="2" /><path d="M5 4h2M3 6v9" strokeDasharray="1 1" /><rect x="7" y="2" width="5" height="4" fill="#8d8da6" /><rect x="10" y="9" width="5" height="5" fill="#8d8da6" /><path d="M12 6v3" /></Svg>
            <span>Object Manager</span>
          </DockerTab>
          <DockerAdd aria-label="Add docker"><CirclePlus /></DockerAdd>
        </Docker>
        <ColorBar>
          <ColorTop>
            <svg width="12" height="2"><path d="M1 1h10" stroke="#999" strokeWidth="2" strokeDasharray="2 2" /></svg>
            <Arrow />
            <Dropper faded />
            <Angle dir="up" color="#ccc" width={1.5} />
          </ColorTop>
          <ColorList>
            <NoColor />
            {swatches.map((c, i) => <PaletteSwatch key={c} $c={c} $ring={i === 1} aria-label={c} />)}
          </ColorList>
          <ColorEnd><Angle dir="down" color="#aaa" width={1.5} /><DoubleAngle /></ColorEnd>
        </ColorBar>
      </Workspace>
      <StatusBar>
        <span>( 1.287 , -0.363 )</span>
        <PlayBox aria-label="Document info"><Arrow /></PlayBox>
        <StatusGroup $w={233}>
          <Svg w={16} h={16}><rect x="1.500" y="1.500" width="13" height="10" fill="#fff" /><circle cx="8" cy="6.500" r="3" fill="#b66" /><path d="M4 14.500h8" strokeWidth="1.500" /></Svg>
          <Svg w={28} h={16}><g transform="translate(10 1) scale(1.300)"><Bucket /></g></Svg>
          <NoColor />
          <span>None</span>
        </StatusGroup>
        <StatusGroup $w={196}>
          <VRule $h={20} />
          <Svg w={18} h={18}><path d="M9 1l4 8-2 5H7L5 9zM9 2v7" fill="#fff" /><path d="M5 16h8" strokeWidth="2" /></Svg>
          <Swatch $c="#231f20" aria-label="Outline color" />
          <span>C:0 M:0 Y:0 K:100  0.200 mm</span>
        </StatusGroup>
      </StatusBar>
      <ExportDialog />
    </Page>
  );
}
